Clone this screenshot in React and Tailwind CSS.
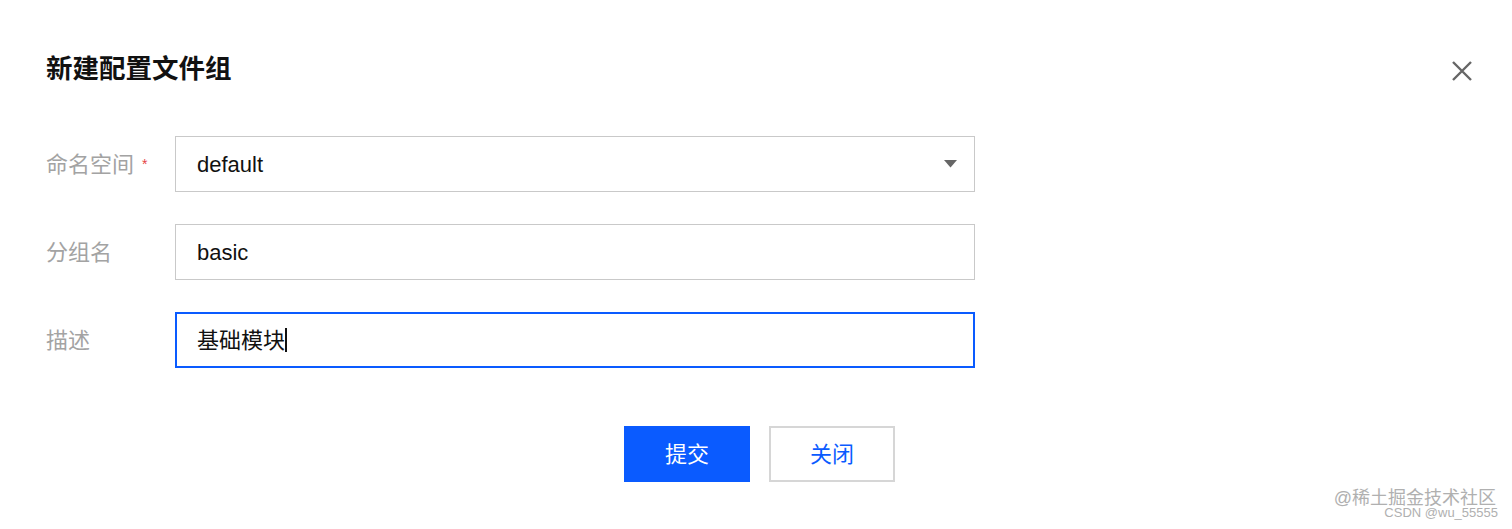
import React from "react";

const cjk = { fontFamily: '"Liberation Sans", "Noto Sans CJK SC", sans-serif' };

const Field = ({ label, required, children }) => (
  <div className="flex items-center">
    <div className="w-[129px] flex items-center text-[22px] text-[#a3a3a3]">
      {label}
      {required && <span className="ml-[8px] text-[14px] text-[#e54545] leading-none">*</span>}
    </div>
    {children}
  </div>
);

export default function App() {
  return (
    <div className="relative w-full h-[529px] bg-white overflow-hidden" style={cjk}>
      {/* Header */}
      <div className="flex items-center justify-between pl-[46px] pr-[38px] pt-[51px]">
        <h1 className="text-[26.5px] font-bold text-[#111] leading-[36px]">新建配置文件组</h1>
        <button className="w-[24px] h-[24px] flex items-center justify-center text-[#666] mt-[4px]">
          <svg width="22" height="22" viewBox="0 0 22 22" fill="none" stroke="currentColor" strokeWidth="2.4">
            <path d="M2 2 L20 20 M20 2 L2 20" />
          </svg>
        </button>
      </div>

      {/* Form */}
      <div className="pl-[46px] mt-[49px] flex flex-col gap-[32px]">
        <Field label="命名空间" required>
          <div className="w-[800px] h-[56px] border border-[#c9c9c9] flex items-center justify-between pl-[21px] pr-[17px]">
            <span className="text-[22px] text-[#111]">default</span>
            <svg width="13" height="8" viewBox="0 0 13 8">
              <path d="M0 0 H13 L6.5 7.5 Z" fill="#666" />
            </svg>
          </div>
        </Field>
        <Field label="分组名">
          <div className="w-[800px] h-[56px] border border-[#c9c9c9] flex items-center pl-[21px]">
            <span className="text-[22px] text-[#111]">basic</span>
          </div>
        </Field>
        <Field label="描述">
          <div className="w-[800px] h-[56px] border-2 border-[#0a5bff] flex items-center pl-[20px]">
            <span className="text-[22px] text-[#111]">基础模块</span>
            <span className="w-[1.5px] h-[24px] bg-[#111]" />
          </div>
        </Field>
      </div>

      {/* Actions */}
      <div className="mt-[58px] flex justify-center gap-[19px] pl-[7px]">
        <button className="w-[126px] h-[56px] bg-[#0a5bff] text-white text-[22px]">提交</button>
        <button className="w-[126px] h-[56px] bg-white border-2 border-[#d6d6d6] text-[#0a5bff] text-[22px]">关闭</button>
      </div>

      {/* Watermark */}
      <div className="absolute right-[16px] bottom-[10px] flex flex-col items-end">
        <span className="text-[18px] text-[#b0b0b0] leading-[18px]">@稀土掘金技术社区</span>
        <span className="text-[13px] text-[#b0b0b0] leading-[12px] -mr-[2px]">CSDN @wu_55555</span>
      </div>
    </div>
  );
}
